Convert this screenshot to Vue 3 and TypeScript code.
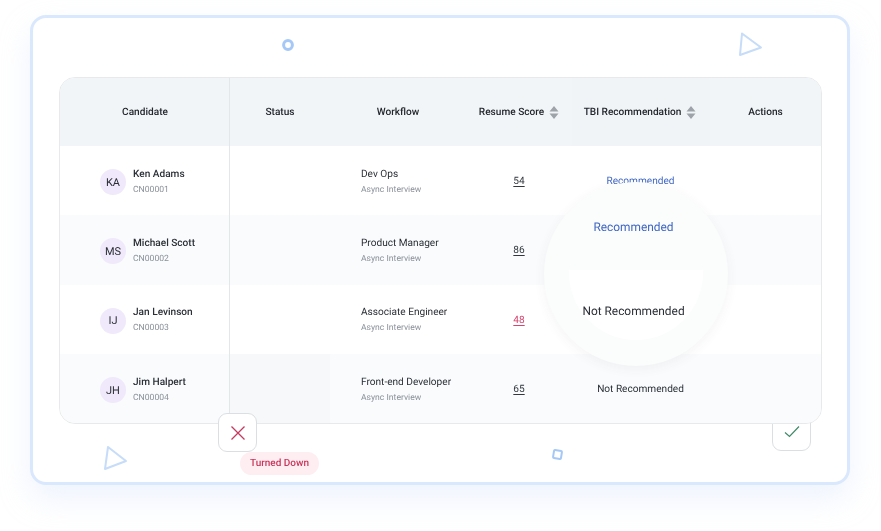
<template>
  <div class="page">
    <div class="card">
      <!-- floating shapes -->
      <svg class="shapes" width="820" height="470" viewBox="0 0 820 470" fill="none">
        <circle cx="258" cy="30" r="4.4" stroke="#a5c8f6" stroke-width="3" />
        <path d="M712 18.5 L731 32.5 L710 40 Z" stroke="#c6dcf8" stroke-width="2" stroke-linejoin="round" />
        <path d="M78 432 L96 446 L75 454 Z" stroke="#c6dcf8" stroke-width="2" stroke-linejoin="round" />
        <rect x="523.5" y="435.5" width="8" height="8" rx="1" transform="rotate(9 527.5 439.5)" stroke="#a5c8f6" stroke-width="2" />
      </svg>

      <div class="action-btn accept">
        <svg width="16" height="14" viewBox="0 0 16 14" fill="none">
          <path d="M1 7.5 L5.5 11.5 L15 1.5" stroke="#3f8a68" stroke-width="1.2" />
        </svg>
      </div>

      <div class="table">
        <div class="row head">
          <div class="cell">Candidate</div>
          <div class="cell status">Status</div>
          <div class="cell">Workflow</div>
          <div class="cell sortable">
            Resume Score
            <svg width="10" height="13" viewBox="0 0 10 13"><path d="M5 0 L9.5 5.5 H0.5 Z M0.5 7.5 H9.5 L5 13 Z" fill="#9ea3a9" /></svg>
          </div>
          <div class="cell sortable tbi">
            TBI Recommendation
            <svg width="10" height="13" viewBox="0 0 10 13"><path d="M5 0 L9.5 5.5 H0.5 Z M0.5 7.5 H9.5 L5 13 Z" fill="#9ea3a9" /></svg>
          </div>
          <div class="cell">Actions</div>
        </div>

        <div v-for="(c, i) in candidates" :key="c.id" class="row" :class="{ even: i % 2 === 1 }">
          <div class="cell person">
            <span class="avatar">{{ c.initials }}</span>
            <div class="stack">
              <span class="name">{{ c.name }}</span>
              <span class="sub">{{ c.id }}</span>
            </div>
          </div>
          <div class="cell status" :class="{ shaded: i === 3 }"></div>
          <div class="cell flow">
            <div class="stack">
              <span class="role">{{ c.role }}</span>
              <span class="sub">Async Interview</span>
            </div>
          </div>
          <div class="cell nudge"><span class="score" :class="{ low: c.score < 50 }">{{ c.score }}</span></div>
          <div class="cell rec nudge" :class="{ blue: c.rec === 'Recommended' }">{{ c.rec }}</div>
          <div class="cell"></div>
        </div>
      </div>

      <!-- magnifier over the recommendation column -->
      <div class="lens">
        <span class="lens-rec">Recommended</span>
        <div class="lens-white">
          <span>Not Recommended</span>
        </div>
      </div>

      <div class="action-btn reject">
        <svg width="16" height="16" viewBox="0 0 16 16" fill="none">
          <path d="M1.5 1.5 L14.5 14.5 M14.5 1.5 L1.5 14.5" stroke="#c8375c" stroke-width="1.3" />
        </svg>
      </div>
      <span class="pill">Turned Down</span>
    </div>
  </div>
</template>

<script setup lang="ts">
interface Candidate {
  initials: string
  name: string
  id: string
  role: string
  score: number
  rec: string
}

const candidates: Candidate[] = [
  { initials: 'KA', name: 'Ken Adams', id: 'CN00001', role: 'Dev Ops', score: 54, rec: 'Recommended' },
  { initials: 'MS', name: 'Michael Scott', id: 'CN00002', role: 'Product Manager', score: 86, rec: '' },
  { initials: 'IJ', name: 'Jan Levinson', id: 'CN00003', role: 'Associate Engineer', score: 48, rec: '' },
  { initials: 'JH', name: 'Jim Halpert', id: 'CN00004', role: 'Front-end Developer', score: 65, rec: 'Not Recommended' },
]
</script>

<style scoped>
.page {
  width: 881px;
  height: 531px;
  padding: 15px 0 0 30px;
  box-sizing: border-box;
  background: #fff;
  overflow: hidden;
  font-family: Roboto, 'Liberation Sans', sans-serif;
  text-rendering: geometricPrecision;
  color: #2b2f36;
  filter: blur(0.3px);
}

.card {
  position: relative;
  width: 820px;
  height: 470px;
  box-sizing: border-box;
  padding: 59px 0 0 26px;
  background: #fff;
  border: 3px solid #d9e8fc;
  border-radius: 16px;
  box-shadow: 0 14px 30px rgba(205, 222, 250, 0.35);
}

.shapes {
  position: absolute;
  left: -3px;
  top: -3px;
}

.table {
  position: relative;
  z-index: 2;
  width: 763px;
  box-sizing: border-box;
  background: #fff;
  border: 1px solid #e7e9eb;
  border-radius: 16px;
  overflow: hidden;
  font-size: 10.1px;
}

.row {
  display: grid;
  grid-template-columns: 170px 100px 136px 106px 138px 111px;
  height: 69.3px;
}

.row.even {
  background: #f9fbfc;
}

.head {
  height: 68px;
  box-sizing: border-box;
  background: #f2f5f7;
  font-weight: 500;
  color: #23272e;
}

.cell {
  display: flex;
  align-items: center;
  justify-content: center;
}

.nudge {
  padding-top: 2px;
}

.status {
  border-left: 1px solid #e4e7e9;
  margin-left: -1px;
}

.shaded {
  background: #f6f8f9;
}

.sortable {
  gap: 5px;
}

.tbi {
  background: #f1f4f6;
  padding-right: 2px;
}

.rec {
  padding-right: 1px;
}

.person {
  justify-content: flex-start;
  padding: 3px 0 0 40px;
  gap: 7px;
}

.avatar {
  display: flex;
  align-items: center;
  justify-content: center;
  width: 26px;
  height: 26px;
  border-radius: 50%;
  background: #f0e8fb;
  font-size: 11px;
}

.stack {
  display: flex;
  flex-direction: column;
  gap: 3px;
  line-height: 12px;
}

.name {
  font-weight: 500;
}

.sub {
  font-size: 8.6px;
  color: #8a9099;
}

.flow {
  justify-content: flex-start;
  padding: 3px 0 0 31px;
}

.score {
  text-decoration: underline;
  text-underline-offset: 1.5px;
  color: #33373d;
}

.score.low {
  color: #d6456f;
}

.blue {
  color: #3f67c2;
}

.lens {
  position: absolute;
  z-index: 3;
  left: 511px;
  top: 164px;
  width: 184px;
  height: 184px;
  box-sizing: border-box;
  padding-top: 37px;
  display: flex;
  flex-direction: column;
  align-items: center;
  border-radius: 50%;
  background: #fbfcfc;
  box-shadow: 0 3px 12px rgba(60, 70, 80, 0.06);
  font-size: 11.9px;
  line-height: 16px;
}

.lens-rec {
  height: 51px;
  padding-right: 5px;
  color: #3f67c2;
}

.lens-white {
  width: 134px;
  height: 70px;
  box-sizing: border-box;
  padding: 33px 5px 0 0;
  text-align: center;
  background: #fff;
  border-radius: 0 0 67px 67px;
}

.action-btn {
  position: absolute;
  display: flex;
  align-items: center;
  justify-content: center;
  width: 39px;
  height: 39px;
  box-sizing: border-box;
  background: #fff;
  border: 1.5px solid #dcdfe2;
  border-radius: 9px;
}

.reject {
  z-index: 4;
  left: 185px;
  top: 395px;
}

.accept {
  z-index: 1;
  left: 739px;
  top: 394px;
}

.pill {
  position: absolute;
  z-index: 4;
  left: 207px;
  top: 434px;
  width: 79px;
  height: 23px;
  line-height: 23px;
  text-align: center;
  border-radius: 12px;
  background: #feeef1;
  color: #c8375c;
  font-size: 10px;
  font-weight: 500;
}
</style>
